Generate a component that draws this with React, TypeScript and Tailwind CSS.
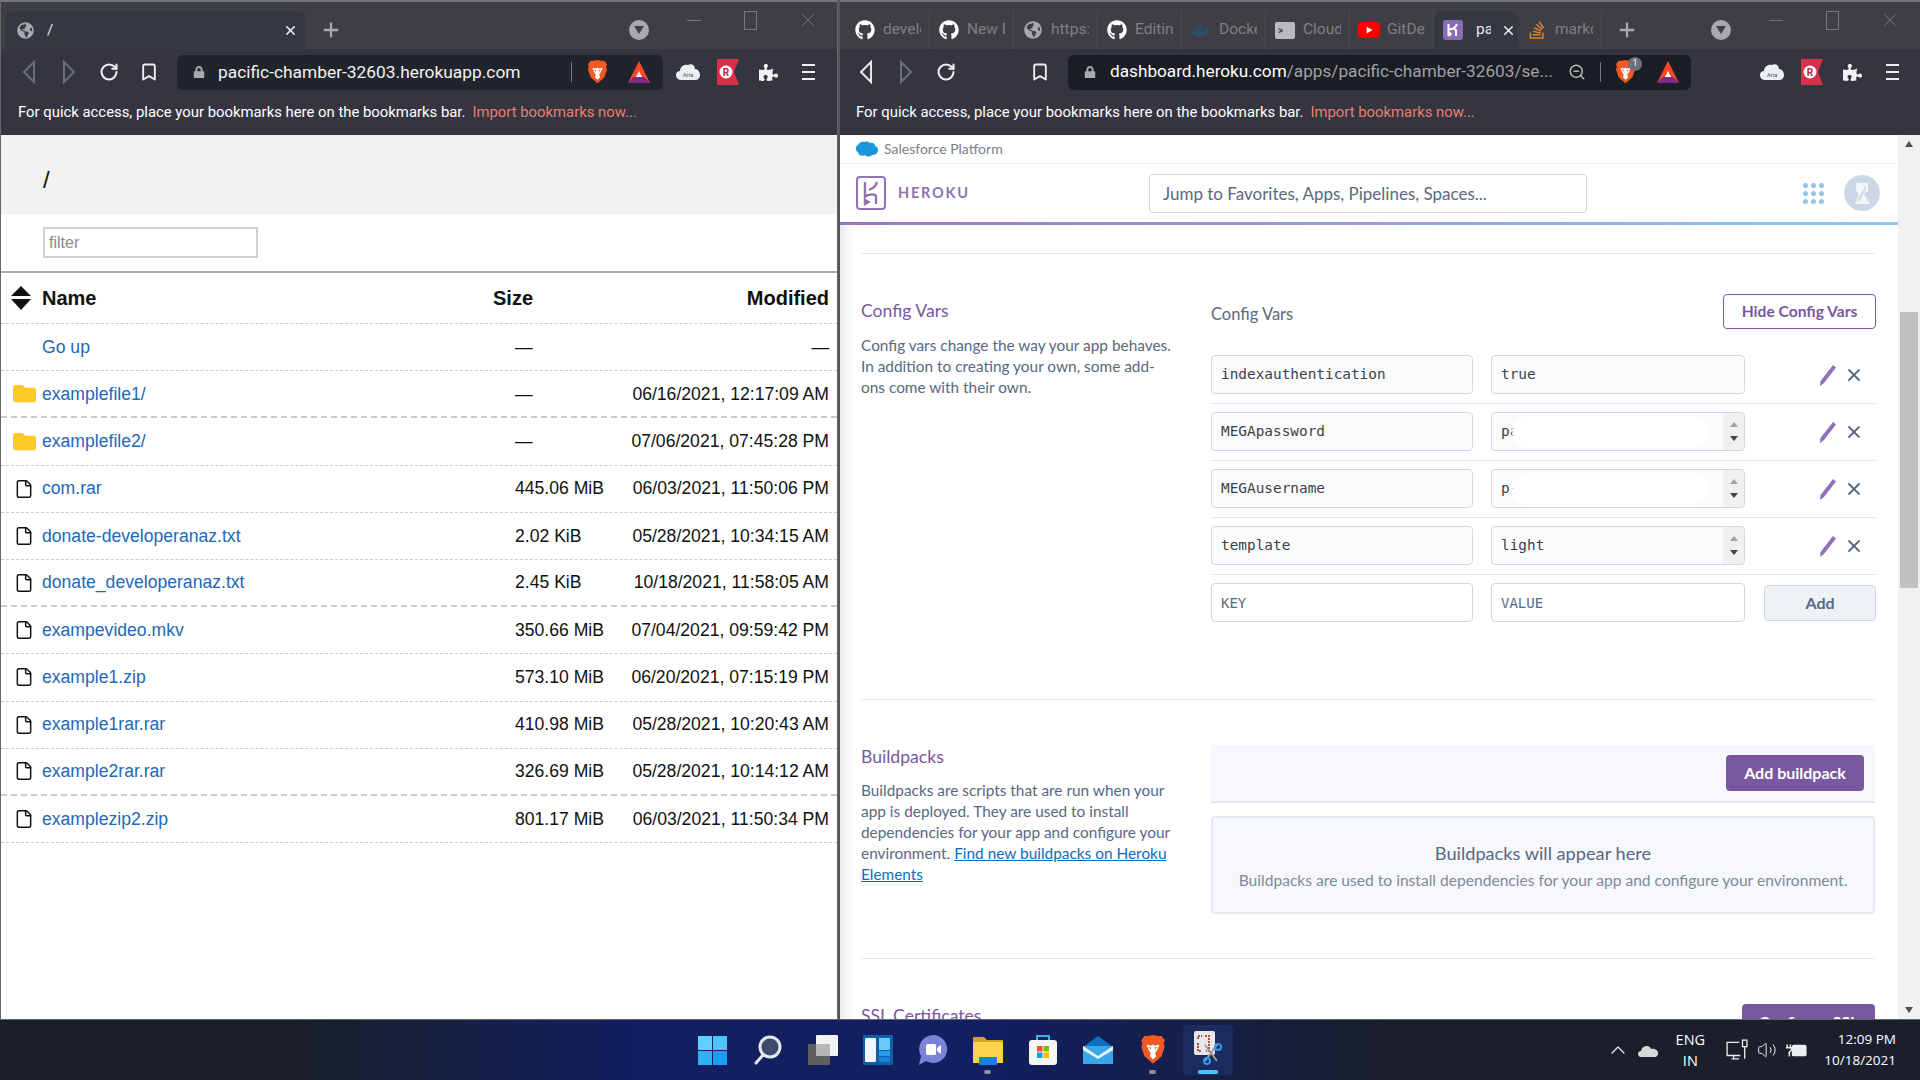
import { ReactNode } from "react";
import { Bookmark, ChevronUp, File, RotateCw, X, ZoomOut, Plus, Volume2 } from "lucide-react";
import { FaDocker, FaFolder, FaGithub, FaGlobeAmericas, FaLock, FaPuzzlePiece, FaStackOverflow, FaYoutube } from "react-icons/fa";

const chromeFont = "font-['Roboto',sans-serif]";
const herokuFont = "font-['Lato',sans-serif]";
const monoFont = "font-['DejaVu_Sans_Mono',monospace]";

const files = [
  { name: "Go up", kind: "up", size: "—", date: "—" },
  { name: "examplefile1/", kind: "folder", size: "—", date: "06/16/2021, 12:17:09 AM", thick: true },
  { name: "examplefile2/", kind: "folder", size: "—", date: "07/06/2021, 07:45:28 PM" },
  { name: "com.rar", kind: "file", size: "445.06 MiB", date: "06/03/2021, 11:50:06 PM" },
  { name: "donate-developeranaz.txt", kind: "file", size: "2.02 KiB", date: "05/28/2021, 10:34:15 AM" },
  { name: "donate_developeranaz.txt", kind: "file", size: "2.45 KiB", date: "10/18/2021, 11:58:05 AM", thick: true },
  { name: "exampevideo.mkv", kind: "file", size: "350.66 MiB", date: "07/04/2021, 09:59:42 PM" },
  { name: "example1.zip", kind: "file", size: "573.10 MiB", date: "06/20/2021, 07:15:19 PM" },
  { name: "example1rar.rar", kind: "file", size: "410.98 MiB", date: "05/28/2021, 10:20:43 AM" },
  { name: "example2rar.rar", kind: "file", size: "326.69 MiB", date: "05/28/2021, 10:14:12 AM", thick: true },
  { name: "examplezip2.zip", kind: "file", size: "801.17 MiB", date: "06/03/2021, 11:50:34 PM" },
];

const configRows = [
  { k: "indexauthentication", v: "true", spin: false, hide: false },
  { k: "MEGApassword", v: "pa", spin: true, hide: true },
  { k: "MEGAusername", v: "p-", spin: true, hide: true },
  { k: "template", v: "light", spin: true, hide: false },
];

function BraveIcon({ size = 22 }: { size?: number }) {
  return (
    <svg width={size} height={size * 1.15} viewBox="0 0 24 28">
      <path d="M12 0 L17 1 L20 1 L23 5 L22 8 L23 11 L20 20 L12 27 L4 20 L1 11 L2 8 L1 5 L4 1 L7 1 Z" fill="#f15a22" />
      <path d="M6 9 L10 10 L12 9 L14 10 L18 9 L16 14 L14 17 L15 20 L12 23 L9 20 L10 17 L8 14 Z" fill="#fff" />
      <path d="M8 11 L10.5 12 L9.5 13.5 Z M16 11 L13.5 12 L14.5 13.5 Z" fill="#f15a22" />
    </svg>
  );
}

function BatIcon() {
  return (
    <svg width="24" height="22" viewBox="0 0 24 22">
      <path d="M12 0 L23 22 H1 Z" fill="#ff4724" />
      <path d="M12 10 L18 22 H6 Z" fill="#fff" />
      <path d="M1 22 L6.5 16 H17.5 L23 22 Z" fill="#7b2a86" />
    </svg>
  );
}

function AriaCloud() {
  return (
    <svg width="24" height="18" viewBox="0 0 24 18">
      <path d="M6 17 C2 17 0 15 0 12 C0 9 2 8 4 8 C4 4 8 1 12 2 C15 0 19 2 19 6 C22 6 24 9 24 12 C24 15 22 17 19 17 Z" fill="#eceff1" />
      <text x="12" y="14" fontSize="6" textAnchor="middle" fill="#555" fontFamily="Roboto, sans-serif">Aria</text>
    </svg>
  );
}

function RedExt() {
  return (
    <svg width="22" height="26" viewBox="0 0 22 26">
      <path d="M0 0 H22 L17 13 L22 26 H0 Z" fill="#d9304a" />
      <circle cx="9" cy="13" r="6.5" fill="#fff" />
      <text x="9" y="16.5" fontSize="10" fontWeight="700" textAnchor="middle" fill="#c2223a" fontFamily="Roboto, sans-serif">R</text>
    </svg>
  );
}

function NavArrow({ dir, dim }: { dir: "left" | "right"; dim?: boolean }) {
  return (
    <svg width="14" height="24" viewBox="0 0 14 24">
      <path
        d={dir === "left" ? "M12 2 L2 12 L12 22 Z" : "M2 2 L12 12 L2 22 Z"}
        fill="none"
        stroke={dim ? "#6d6f78" : "#e8e8ea"}
        strokeWidth="2"
      />
    </svg>
  );
}

function MenuIcon() {
  return (
    <div className="flex flex-col gap-[5px]">
      <div className="w-[13px] h-[2px] bg-[#eee]" />
      <div className="w-[13px] h-[2px] bg-[#eee]" />
      <div className="w-[13px] h-[2px] bg-[#eee]" />
    </div>
  );
}

function ToolIcon({ children }: { children: ReactNode }) {
  return <div className="w-[40px] h-[40px] flex items-center justify-center shrink-0">{children}</div>;
}

function TabDropdown() {
  return (
    <div className="w-[20px] h-[20px] rounded-full bg-[#a9a9ad] flex items-center justify-center">
      <div className="w-0 h-0 border-x-[5px] border-x-transparent border-t-[8px] border-t-[#3e3e44]" />
    </div>
  );
}

function WindowButtons() {
  return (
    <div className="flex items-center h-[34px] -mt-[20px]">
      <div className="w-[57px] flex justify-center"><div className="w-[14px] h-[1px] bg-[#77777c]" /></div>
      <div className="w-[57px] flex justify-center"><div className="w-[13px] h-[19px] border border-[#77777c]" /></div>
      <div className="w-[57px] flex justify-center"><X size={22} strokeWidth={1} className="text-[#77777c]" /></div>
    </div>
  );
}

function BookmarksBar() {
  return (
    <div className={`h-[34px] bg-[#343541] flex items-center text-[14.87px] text-white ${chromeFont}`}>
      <span>For quick access, place your bookmarks here on the bookmarks bar.</span>
      <span className="ml-[7px] text-[#e8806f]">Import bookmarks now...</span>
    </div>
  );
}

function LeftWindow() {
  return (
    <div className="w-[838px] h-full flex flex-col border-l border-r border-b border-[#666] overflow-hidden shrink-0">
      <div className="h-[49px] bg-[#3e3e44] border-t-2 border-t-[#777] flex items-end pl-[4px] shrink-0">
        <div className={`w-[301px] h-[38px] bg-[#353743] rounded-t-lg flex items-center pl-[12px] pr-[6px] text-[#e8e8e8] ${chromeFont}`}>
          <FaGlobeAmericas size={17} className="text-[#a9aaae]" />
          <span className="ml-[13px] text-[15px] flex-1">/</span>
          <X size={15} strokeWidth={2.5} className="text-[#eee] mr-[2px]" />
        </div>
        <div className="h-[38px] w-[50px] flex items-center justify-center text-[#a8a8ac]">
          <Plus size={22} strokeWidth={2.5} />
        </div>
        <div className="h-[38px] flex items-center ml-[273px]">
          <TabDropdown />
        </div>
        <div className="h-[38px] flex items-center ml-[16px]">
          <WindowButtons />
        </div>
      </div>
      <div className="h-[46px] bg-[#343541] flex items-center pl-[8px] shrink-0">
        <ToolIcon><NavArrow dir="left" dim /></ToolIcon>
        <ToolIcon><NavArrow dir="right" dim /></ToolIcon>
        <ToolIcon><RotateCw size={20} strokeWidth={2.5} className="text-[#eee]" /></ToolIcon>
        <ToolIcon><Bookmark size={20} strokeWidth={2.2} className="text-[#eee]" /></ToolIcon>
        <div className={`ml-[8px] w-[486px] h-[35px] bg-[#22242c] rounded-md flex items-center pl-[16px] ${chromeFont}`}>
          <FaLock size={12} className="text-[#a9aaae]" />
          <span className="ml-[13px] text-[#f2f2f2] text-[17.35px] w-[353px]">pacific-chamber-32603.herokuapp.com</span>
          <div className="w-[1px] h-[20px] bg-[#77787e]" />
          <div className="ml-[15px]"><BraveIcon size={21} /></div>
          <div className="ml-[19px]"><BatIcon /></div>
        </div>
        <div className="ml-[5px] flex">
          <ToolIcon><AriaCloud /></ToolIcon>
          <ToolIcon><RedExt /></ToolIcon>
          <ToolIcon><FaPuzzlePiece size={19} className="text-[#f2f2f2]" /></ToolIcon>
          <ToolIcon><MenuIcon /></ToolIcon>
        </div>
      </div>
      <div className="pl-[17px] pb-[6px] bg-[#343541] shrink-0"><BookmarksBar /></div>

      <div className="flex-1 bg-white font-['Liberation_Sans',sans-serif] text-[#111]">
        <div className="h-[79px] bg-[#f2f2f2] pl-[42px] flex items-center text-[24px] pt-[10px]">/</div>
        <div className="h-[59px] pl-[42px] pt-[13px] border-b-2 border-[#aaa]">
          <input
            readOnly
            placeholder="filter"
            className="w-[215px] h-[31px] border-2 border-[#d0d0d0] px-[4px] text-[16px] placeholder:text-[#8a8a8a] outline-none"
          />
        </div>
        <div className="h-[51px] grid grid-cols-[41px_451px_1fr_auto] items-center pr-[8px] font-bold text-[20px] border-b border-dashed border-[#ccc]">
          <svg width="20" height="24" viewBox="0 0 20 24" className="ml-[10px]">
            <path d="M10 0 L20 10 H0 Z M0 13 H20 L10 24 Z" fill="#111" />
          </svg>
          <span>Name</span>
          <span>Size</span>
          <span>Modified</span>
        </div>
        {files.map((f) => (
          <div
            key={f.name}
            className={`h-[47.2px] grid grid-cols-[41px_473px_1fr_auto] items-center pr-[8px] text-[17.6px] border-dashed border-[#ccc] ${f.thick ? "border-b-2" : "border-b"}`}
          >
            <div className="flex justify-center pl-[5px]">
              {f.kind === "folder" && <FaFolder size={23} className="text-[#ffca28]" />}
              {f.kind === "file" && <File size={20} strokeWidth={1.8} className="text-[#111]" />}
            </div>
            <span className="text-[#2268b8]">{f.name}</span>
            <span>{f.size}</span>
            <span>{f.date}</span>
          </div>
        ))}
      </div>
    </div>
  );
}

function GhTab({ label, icon, active }: { label: string; icon: ReactNode; active?: boolean }) {
  return (
    <div
      className={`w-[84px] h-[38px] flex items-center pl-[9px] shrink-0 text-[15.5px] ${chromeFont} ${active ? "bg-[#353743] rounded-t-lg text-[#e8e8e8]" : "border-r border-[#4a4a50] text-[#7f7f85]"}`}
    >
      <div className="w-[20px] flex justify-center shrink-0">{icon}</div>
      <span className={`overflow-hidden whitespace-nowrap ${active ? "ml-[13px] w-[15px]" : "ml-[8px] w-[38px]"}`}>{label}</span>
      {active && <X size={15} strokeWidth={2.5} className="ml-[10px] text-[#eee]" />}
    </div>
  );
}

function HerokuFavicon() {
  return (
    <svg width="20" height="20" viewBox="0 0 20 20">
      <rect width="20" height="20" rx="3" fill="#8a6bb5" />
      <path d="M5.5 4 V16 M5.5 10 C8 8.5 13 8 13 11 V16 M14 4 C13.5 6 12 7.5 10 8.5 M5.5 16 L8 14 L5.5 12" stroke="#fff" strokeWidth="2" fill="none" />
    </svg>
  );
}

function HerokuLogo() {
  return (
    <svg width="30" height="34" viewBox="0 0 30 34">
      <rect x="1" y="1" width="28" height="32" rx="3" fill="none" stroke="#9074b5" strokeWidth="2" />
      <path d="M9 6 V21 C12 18 20 17 20 21 V28 M21 6 C20 10 17 12.5 13 14 M9 28 V24 L12.5 26 Z" stroke="#9074b5" strokeWidth="2.4" fill="none" />
    </svg>
  );
}

function PencilIcon() {
  return (
    <svg width="18" height="24" viewBox="0 0 18 24">
      <path d="M14 2 L17 4.5 L5 20 L1 23 L1.5 18 Z" fill="#8f71b8" />
    </svg>
  );
}

function Spinner() {
  return (
    <div className="relative z-10 w-[21px] h-full bg-[#f0f0f0] flex flex-col items-center justify-center gap-[9px] rounded-r shrink-0">
      <div className="w-0 h-0 border-x-[4px] border-x-transparent border-b-[5px] border-b-[#a3a3a3]" />
      <div className="w-0 h-0 border-x-[4px] border-x-transparent border-t-[5px] border-t-[#444]" />
    </div>
  );
}

function ConfigRow({ k, v, spin, hide }: { k: string; v: string; spin: boolean; hide: boolean }) {
  return (
    <div className="flex items-center h-[39px]">
      <div className={`w-[262px] h-[39px] bg-[#fafbfd] border border-[#cfd7e6] rounded flex items-center pl-[9px] text-[14.4px] text-[#3f3f44] ${monoFont}`}>{k}</div>
      <div className={`relative ml-[18px] w-[254px] h-[39px] bg-[#fafbfd] border border-[#cfd7e6] rounded flex items-center justify-between pl-[9px] text-[14.4px] text-[#3f3f44] overflow-hidden ${monoFont}`}>
        <span>{v}</span>
        {hide && <div className="absolute left-[20px] top-[3px] w-[196px] h-[32px] bg-white rounded-full blur-[1px]" />}
        {spin && <Spinner />}
      </div>
      <div className="ml-[74px] flex items-center">
        <PencilIcon />
        <X size={20} strokeWidth={2.2} className="ml-[7px] text-[#596981]" />
      </div>
    </div>
  );
}

function RightWindow() {
  return (
    <div className="flex-1 h-full flex flex-col overflow-hidden border-b border-[#666] ml-[2px]">
      <div className="h-[49px] bg-[#3e3e44] border-t-2 border-t-[#777] flex items-end pl-[6px] shrink-0">
        <GhTab label="develop" icon={<FaGithub size={20} className="text-white" />} />
        <GhTab label="New F" icon={<FaGithub size={20} className="text-white" />} />
        <GhTab label="https:/" icon={<FaGlobeAmericas size={18} className="text-[#a9aaae]" />} />
        <GhTab label="Editin" icon={<FaGithub size={20} className="text-white" />} />
        <GhTab label="Docke" icon={<FaDocker size={19} className="text-[#2b4f68]" />} />
        <GhTab
          label="Cloud"
          icon={
            <div className="w-[20px] h-[17px] bg-[#b9babd] rounded-[2px] flex items-center pl-[3px] text-[#3e3e44] text-[10px] font-bold">&gt;</div>
          }
        />
        <GhTab
          label="GitDe"
          icon={
            <div className="relative w-[20px] h-[14px] bg-white">
              <FaYoutube size={24} className="absolute -left-[2px] -top-[5px] text-[#f00]" />
            </div>
          }
        />
        <GhTab label="pa" active icon={<HerokuFavicon />} />
        <GhTab label="markc" icon={<FaStackOverflow size={20} className="text-[#d9812f]" />} />
        <div className="h-[38px] w-[50px] flex items-center justify-center text-[#a8a8ac]">
          <Plus size={22} strokeWidth={2.5} />
        </div>
        <div className="h-[38px] flex items-center ml-[59px]">
          <TabDropdown />
        </div>
        <div className="h-[38px] flex items-center ml-[16px]">
          <WindowButtons />
        </div>
      </div>
      <div className="h-[46px] bg-[#343541] flex items-center pl-[6px] shrink-0">
        <ToolIcon><NavArrow dir="left" /></ToolIcon>
        <ToolIcon><NavArrow dir="right" dim /></ToolIcon>
        <ToolIcon><RotateCw size={20} strokeWidth={2.5} className="text-[#eee]" /></ToolIcon>
        <div className="ml-[54px]"><ToolIcon><Bookmark size={20} strokeWidth={2.2} className="text-[#eee]" /></ToolIcon></div>
        <div className={`ml-[8px] w-[623px] h-[35px] bg-[#1b1d24] rounded-md flex items-center pl-[16px] ${chromeFont}`}>
          <FaLock size={12} className="text-[#a9aaae]" />
          <span className="ml-[14px] text-[17.2px] w-[455px] overflow-hidden whitespace-nowrap text-[#a0a1a6]">
            <span className="text-white">dashboard.heroku.com</span>/apps/pacific-chamber-32603/se...
          </span>
          <ZoomOut size={18} className="ml-[3px] text-[#b5b6ba]" />
          <div className="ml-[14px] w-[1px] h-[20px] bg-[#77787e]" />
          <div className="relative ml-[14px]">
            <BraveIcon size={21} />
            <div className="absolute -top-[3px] -right-[6px] w-[14px] h-[14px] rounded-full bg-[#6e7079] text-[9px] text-white flex items-center justify-center">1</div>
          </div>
          <div className="ml-[20px]"><BatIcon /></div>
        </div>
        <div className="ml-[61px] flex">
          <ToolIcon><AriaCloud /></ToolIcon>
          <ToolIcon><RedExt /></ToolIcon>
          <ToolIcon><FaPuzzlePiece size={19} className="text-[#f2f2f2]" /></ToolIcon>
          <ToolIcon><MenuIcon /></ToolIcon>
        </div>
      </div>
      <div className="pl-[16px] pb-[6px] bg-[#343541] shrink-0"><BookmarksBar /></div>

      <div className={`flex-1 flex min-h-0 bg-white ${herokuFont}`}>
        <div className="flex-1 flex flex-col min-w-0 overflow-hidden">
          <div className="h-[29px] flex items-center pl-[15px] pb-[1px] border-b border-[#eef0f4] shrink-0">
            <svg width="24" height="16" viewBox="0 0 24 16">
              <path d="M10 1 C12 0 14 1 15 2 C17 1 20 2 20 5 C23 6 24 9 22 12 C21 14 18 14 17 14 C15 16 12 16 10 14 C7 16 3 14 3 11 C0 10 0 5 3 4 C4 1 8 0 10 1 Z" fill="#1b96dc" />
            </svg>
            <span className="ml-[5px] text-[14px] text-[#7a7f86]">Salesforce Platform</span>
          </div>
          <div className="h-[58px] flex items-center pl-[16px] shrink-0">
            <HerokuLogo />
            <span className="ml-[12px] w-[71px] text-[14.5px] font-bold tracking-[1.8px] text-[#8f74b0]">HEROKU</span>
            <input
              readOnly
              placeholder="Jump to Favorites, Apps, Pipelines, Spaces..."
              className="ml-[180px] w-[438px] h-[39px] border border-[#cfd7e6] rounded px-[13px] text-[17px] placeholder:text-[#596981] outline-none"
            />
            <div className="ml-[216px] grid grid-cols-3 gap-[3px]">
              {Array.from({ length: 9 }).map((_, i) => (
                <div key={i} className="w-[5px] h-[5px] rounded-full bg-[#8fc4e4]" />
              ))}
            </div>
            <div className="ml-[20px] w-[36px] h-[36px] rounded-full bg-[#ccd8e6] flex items-center justify-center">
              <svg width="20" height="26" viewBox="0 0 20 26">
                <path d="M4 3 H16 V11 L12 14 L18 24 H3 L7 14 L4 11 Z" fill="#f2f5f9" />
                <path d="M6 21 L14 7" stroke="#ccd8e6" strokeWidth="2" />
              </svg>
            </div>
          </div>
          <div className="h-[3px] bg-gradient-to-r from-[#9a78b8] to-[#8ccbea] shrink-0" />

          <div className="flex-1 min-h-0 pl-[21px] pr-[23px] bg-[linear-gradient(to_right,#ececec,#ffffff_14px)]">
            <div className="h-[29px] border-b border-[#e5e8ef]" />

            <div className="flex border-b border-[#e5e8ef] h-[446px]">
              <div className="w-[350px] pt-[45px] shrink-0">
                <h2 className="text-[17.6px] leading-[24px] text-[#79589f]">Config Vars</h2>
                <p className="mt-[12px] whitespace-nowrap text-[15.4px] leading-[21px] text-[#596981]">
                  Config vars change the way your app behaves.
                  <br />
                  In addition to creating your own, some add-
                  <br />
                  ons come with their own.
                </p>
              </div>
              <div className="flex-1 pt-[40px]">
                <div className="flex items-center justify-between h-[35px] mb-[26px]">
                  <span className="text-[16.5px] text-[#596981] pt-[5px]">Config Vars</span>
                  <button className="w-[153px] h-[35px] border border-[#79589f] rounded text-[15.6px] font-bold text-[#79589f]">Hide Config Vars</button>
                </div>
                {configRows.map((r) => (
                  <div key={r.k} className="pb-[9px] mb-[8px] border-b border-[#e5e8ef]">
                    <ConfigRow {...r} />
                  </div>
                ))}
                <div className={`flex items-center h-[39px] ${monoFont}`}>
                  <input readOnly placeholder="KEY" className="w-[262px] h-[39px] border border-[#cfd7e6] rounded px-[9px] text-[14px] placeholder:text-[#596981] outline-none" />
                  <input readOnly placeholder="VALUE" className="ml-[18px] w-[254px] h-[39px] border border-[#cfd7e6] rounded px-[9px] text-[14px] placeholder:text-[#596981] outline-none" />
                  <button className={`ml-[19px] w-[112px] h-[36px] bg-[#eef1f6] border border-[#cfd7e6] rounded text-[16px] font-bold text-[#596981] ${herokuFont}`}>Add</button>
                </div>
              </div>
            </div>

            <div className="flex border-b border-[#e5e8ef] h-[259px]">
              <div className="w-[350px] pt-[45px] shrink-0">
                <h2 className="text-[17.6px] leading-[24px] text-[#79589f]">Buildpacks</h2>
                <p className="mt-[11px] whitespace-nowrap text-[15.4px] leading-[21px] text-[#596981]">
                  Buildpacks are scripts that are run when your
                  <br />
                  app is deployed. They are used to install
                  <br />
                  dependencies for your app and configure your
                  <br />
                  environment. <span className="text-[#0f6cbd] underline">Find new buildpacks on Heroku</span>
                  <br />
                  <span className="text-[#0f6cbd] underline">Elements</span>
                </p>
              </div>
              <div className="flex-1 pt-[45px]">
                <div className="h-[58px] bg-[#f7f8fb] border-b-2 border-[#e5e8ef] flex items-center justify-end pr-[11px]">
                  <button className="w-[138px] h-[36px] bg-[#79589f] rounded text-[16px] font-bold text-white">Add buildpack</button>
                </div>
                <div className="mt-[13px] h-[98px] bg-[#f7f8fb] border-2 border-[#e5e8ef] rounded flex flex-col items-center justify-center pt-[3px]">
                  <div className="text-[18.2px] text-[#596981] leading-[27px]">Buildpacks will appear here</div>
                  <div className="text-[15.6px] text-[#7d8a9c] leading-[27px]">Buildpacks are used to install dependencies for your app and configure your environment.</div>
                </div>
              </div>
            </div>

            <div className="flex">
              <div className="w-[350px] pt-[45px] shrink-0">
                <h2 className="text-[17.6px] leading-[24px] text-[#79589f]">SSL Certificates</h2>
              </div>
              <div className="flex-1 pt-[45px] flex justify-between items-start">
                <span className="text-[14px] font-bold text-[#596981] pt-[10px]">SSL Certificates</span>
                <button className="w-[133px] h-[36px] bg-[#79589f] rounded text-[16px] font-bold text-white">Configure SSL</button>
              </div>
            </div>
          </div>
        </div>

        <div className="w-[22px] bg-[#f1f1f1] flex flex-col items-center shrink-0 py-[6px]">
          <div className="w-0 h-0 border-x-[4px] border-x-transparent border-b-[6px] border-b-[#505050]" />
          <div className="mt-[165px] w-[18px] h-[276px] bg-[#c1c1c1]" />
          <div className="flex-1" />
          <div className="w-0 h-0 border-x-[4px] border-x-transparent border-t-[6px] border-t-[#505050]" />
        </div>
      </div>
    </div>
  );
}

function TaskIcon({ children, mark, active }: { children: ReactNode; mark?: "dot" | "bar"; active?: boolean }) {
  return (
    <div className={`relative w-[50px] h-[50px] mx-[2.5px] flex items-center justify-center rounded ${active ? "bg-[#1c2c5f]" : ""}`}>
      {children}
      {mark === "dot" && <div className="absolute bottom-[1px] w-[7px] h-[4px] rounded-full bg-[#8c93a3]" />}
      {mark === "bar" && <div className="absolute bottom-[1px] w-[20px] h-[4px] rounded-full bg-[#4cc2ff]" />}
    </div>
  );
}

function Taskbar() {
  return (
    <div className="h-[60px] flex items-center bg-[linear-gradient(to_right,#1b202b_300px,#121f60_640px,#121f60_1000px,#1b1f2b_1400px)]">
      <div className="flex-1 pl-[24px]" />
      <div className="flex items-center">
        <TaskIcon>
          <div className="grid grid-cols-2 gap-[1px] w-[29px] h-[29px]">
            <div className="bg-[#5fd0fb]" />
            <div className="bg-[#4dc3f8]" />
            <div className="bg-[#2fb0f3]" />
            <div className="bg-[#1b9df0]" />
          </div>
        </TaskIcon>
        <TaskIcon>
          <svg width="28" height="30" viewBox="0 0 28 30">
            <circle cx="16" cy="12" r="10" fill="#3e4a6d" stroke="#e4e7ea" strokeWidth="3" />
            <path d="M9 20 L2 28" stroke="#e4e7ea" strokeWidth="3" strokeLinecap="round" />
          </svg>
        </TaskIcon>
        <TaskIcon>
          <svg width="30" height="30" viewBox="0 0 30 30">
            <rect x="0" y="9" width="22" height="21" rx="1" fill="#5f5f5f" />
            <rect x="8" y="0" width="22" height="21" rx="1" fill="#f2f2f2" />
            <rect x="8" y="9" width="14" height="12" fill="#b7b7b7" />
          </svg>
        </TaskIcon>
        <TaskIcon>
          <svg width="30" height="30" viewBox="0 0 30 30">
            <rect width="30" height="30" rx="1" fill="#0f5fa8" />
            <rect x="2" y="3" width="11" height="24" rx="1" fill="#f2f6fa" />
            <rect x="16" y="3" width="11" height="12" fill="#6cc9f7" />
            <rect x="16" y="16" width="11" height="5" fill="#2b9cec" />
            <rect x="16" y="22" width="11" height="5" fill="#1782d8" />
          </svg>
        </TaskIcon>
        <TaskIcon>
          <svg width="30" height="32" viewBox="0 0 30 32">
            <path d="M15 1 A14 14 0 1 1 8 27 L1 31 L3 22 A14 14 0 0 1 15 1 Z" fill="#7b83d8" />
            <rect x="8" y="10" width="10" height="11" rx="1.5" fill="#fff" />
            <path d="M19 14 L23 11 V20 L19 17 Z" fill="#fff" />
          </svg>
        </TaskIcon>
        <TaskIcon mark="dot">
          <svg width="30" height="30" viewBox="0 0 30 30">
            <path d="M0 2 H11 L14 5 H30 V28 H0 Z" fill="#d9a21b" />
            <rect x="0" y="7" width="30" height="21" rx="1" fill="#fdd34d" />
            <rect x="6" y="22" width="18" height="8" rx="1" fill="#1782d8" />
          </svg>
        </TaskIcon>
        <TaskIcon>
          <svg width="30" height="32" viewBox="0 0 30 32">
            <path d="M9 6 V2 H21 V6" fill="none" stroke="#35b2e8" strokeWidth="2" />
            <rect x="1" y="6" width="28" height="25" rx="3" fill="#f5f5f5" />
            <rect x="9" y="12" width="5.5" height="5.5" fill="#f25022" />
            <rect x="15.5" y="12" width="5.5" height="5.5" fill="#7fba00" />
            <rect x="9" y="18.5" width="5.5" height="5.5" fill="#00a4ef" />
            <rect x="15.5" y="18.5" width="5.5" height="5.5" fill="#ffb900" />
          </svg>
        </TaskIcon>
        <TaskIcon>
          <svg width="30" height="30" viewBox="0 0 30 30">
            <path d="M15 1 L30 12 V28 H0 V12 Z" fill="#0f6fbf" />
            <rect x="0" y="11" width="30" height="18" fill="#35a7ea" />
            <path d="M0 11 L15 21 L30 11 V15 L15 24 L0 15 Z" fill="#e9f4fb" />
          </svg>
        </TaskIcon>
        <TaskIcon mark="dot">
          <BraveIcon size={26} />
        </TaskIcon>
        <TaskIcon mark="bar" active>
          <svg width="30" height="34" viewBox="0 0 30 34" className="-mt-[4px]">
            <rect x="1" y="0" width="21" height="24" rx="2" fill="#e8e8e8" />
            <path d="M5 8 V5 H9 M12 5 H16 V20 H13 M5 12 V20 H9" fill="none" stroke="#b24a3e" strokeWidth="2" strokeDasharray="2 1" />
            <path d="M12 14 L24 30 M24 14 L12 30" stroke="#9a9a9a" strokeWidth="2" />
            <circle cx="25" cy="16" r="3" fill="none" stroke="#2b9cec" strokeWidth="2" />
            <circle cx="14" cy="30" r="3" fill="none" stroke="#2b9cec" strokeWidth="2" />
          </svg>
        </TaskIcon>
      </div>
      <div className="flex-1 flex items-center justify-end pr-[24px] text-white text-[14px] font-['Open_Sans',sans-serif]">
        <ChevronUp size={24} strokeWidth={1.2} className="text-[#eee]" />
        <svg width="22" height="14" viewBox="0 0 22 14" className="ml-[7px]">
          <path d="M4 14 C0 14 0 8 4 8 C5 3 12 1 14 6 C18 5 22 8 21 11 C21 13 19 14 18 14 Z" fill="#d8d8d8" />
        </svg>
        <div className="ml-[10px] w-[42px] text-center leading-[21px] text-[14.5px]">
          <div>ENG</div>
          <div>IN</div>
        </div>
        <svg width="22" height="22" viewBox="0 0 20 20" className="ml-[15px]" fill="none" stroke="#eee" strokeWidth="1.2">
          <path d="M12 3 H1 V15 H13 M5 18 H12 M7 15 V18" />
          <rect x="15" y="1" width="4" height="6" />
          <path d="M17 7 V18" />
        </svg>
        <Volume2 size={20} strokeWidth={1.2} className="ml-[9px] text-[#eee]" />
        <svg width="22" height="18" viewBox="0 0 20 16" className="ml-[9px]" fill="none" stroke="#eee" strokeWidth="1.4">
          <path d="M1 3 V6 M4 3 V6 M0 6 H5 V8 L3 10 V14" />
          <rect x="6" y="4" width="12" height="9" rx="1" fill="#eee" />
        </svg>
        <div className="ml-[16px] text-right leading-[21px] text-[13.5px] -mt-[1px]">
          <div>12:09 PM</div>
          <div>10/18/2021</div>
        </div>
      </div>
    </div>
  );
}

export default function App() {
  return (
    <div className="w-[1920px] h-[1080px] flex flex-col overflow-hidden">
      <div className="h-[1020px] flex shrink-0 bg-[#555]">
        <LeftWindow />
        <RightWindow />
      </div>
      <Taskbar />
    </div>
  );
}
